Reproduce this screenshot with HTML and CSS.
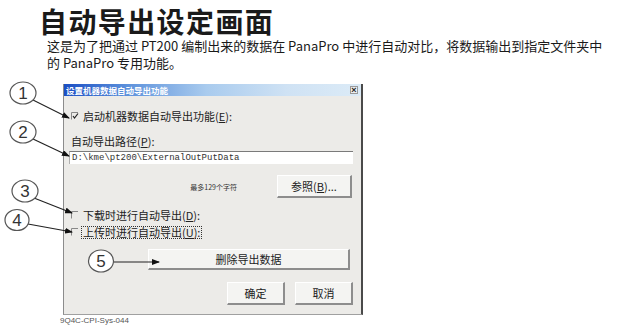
FILE: index.html
```html
<!DOCTYPE html>
<html lang="zh-CN">
<head>
    <meta charset="UTF-8">
    <meta name="viewport" content="width=device-width, initial-scale=1.0">
    <link rel="stylesheet" href="styles.css">
</head>
<body>
    <div class="page">
        <h1 class="title">自动导出设定画面</h1>
        <p class="intro">这是为了把通过 PT200 编制出来的数据在 PanaPro 中进行自动对比，将数据输出到指定文件夹中<br>的 PanaPro 专用功能。</p>

        <div class="dialog">
            <div class="titlebar">
                <span class="titlebar-text">设置机器数据自动导出功能</span>
                <span class="close">×</span>
            </div>
            <div class="dialog-body">
                <div class="check-row row-first">
                    <svg class="chk" width="8" height="8" viewBox="0 0 8 8"><path d="M0.5 7.5 V0.5 H7" fill="none" stroke="#888" stroke-width="1"/><path d="M2 4 L3.5 6 L7 1.5" fill="none" stroke="#222" stroke-width="1.2"/></svg>
                    <span>启动机器数据自动导出功能(<u>E</u>):</span>
                </div>
                <div class="field-label">自动导出路径(<u>P</u>):</div>
                <div class="path-box">D:\kme\pt200\ExternalOutPutData</div>
                <div class="ref-row">
                    <span class="hint">最多129个字符</span>
                    <button class="btn btn-ref">参照(<u>B</u>)...</button>
                </div>
                <div class="check-row row-down">
                    <svg class="chk" width="8" height="8" viewBox="0 0 8 8"><path d="M0.5 7.5 V0.5 H7" fill="none" stroke="#888" stroke-width="1"/></svg>
                    <span>下载时进行自动导出(<u>D</u>):</span>
                </div>
                <div class="check-row row-up">
                    <svg class="chk" width="8" height="8" viewBox="0 0 8 8"><path d="M0.5 7.5 V0.5 H7" fill="none" stroke="#888" stroke-width="1"/></svg>
                    <span class="focus">上传时进行自动导出(<u>U</u>):</span>
                </div>
                <div class="delete-row">
                    <button class="btn btn-delete">删除导出数据</button>
                </div>
                <div class="ok-row">
                    <button class="btn btn-ok">确定</button>
                    <button class="btn btn-cancel">取消</button>
                </div>
            </div>
        </div>
        <div class="caption">9Q4C-CPI-Sys-044</div>

        <!-- numbered callouts drawn over the picture -->
        <svg class="callouts" width="640" height="333" viewBox="0 0 640 333">
            <defs>
                <marker id="head" markerWidth="8" markerHeight="6" refX="7" refY="3" orient="auto" markerUnits="userSpaceOnUse">
                    <path d="M0 0 L8 3 L0 6 Z" fill="#111"/>
                </marker>
            </defs>
            <g class="lines">
                <line x1="33" y1="100" x2="69" y2="118" marker-end="url(#head)"/>
                <line x1="33" y1="139" x2="69" y2="156" marker-end="url(#head)"/>
                <line x1="34" y1="198" x2="72" y2="213" marker-end="url(#head)"/>
                <line x1="28" y1="224" x2="72" y2="232" marker-end="url(#head)"/>
                <line x1="114" y1="262" x2="159" y2="262" marker-end="url(#head)"/>
            </g>
            <g class="bubbles">
                <ellipse cx="23" cy="93" rx="13" ry="11"/>
                <ellipse cx="23" cy="132" rx="13" ry="11"/>
                <ellipse cx="25" cy="191" rx="13" ry="11"/>
                <ellipse cx="17" cy="220" rx="12" ry="10.5"/>
                <ellipse cx="101" cy="261" rx="12.5" ry="11"/>
            </g>
            <g class="nums">
                <text x="23" y="99">1</text>
                <text x="23" y="138">2</text>
                <text x="25" y="197">3</text>
                <text x="17" y="226">4</text>
                <text x="101" y="267">5</text>
            </g>
        </svg>
    </div>
</body>
</html>
```

FILE: styles.css
```css
body {
    margin: 0;
    background: #ffffff;
}

.page {
    position: relative;
    width: 640px;
    height: 333px;
    overflow: hidden;
    font-family: "Noto Sans CJK SC", "Liberation Sans", sans-serif;
    color: #111;
}

.title {
    margin: 5px 0 0 39px;
    font-size: 28px;
    line-height: 32px;
    font-weight: bold;
    letter-spacing: 1.4px;
    color: #1a1a1a;
}

.intro {
    margin: 0 0 0 47px;
    font-size: 13px;
    line-height: 17px;
    color: #1a1a1a;
}

.dialog {
    margin: 13px 0 0 63px;
    width: 300px;
    height: 231px;
    box-sizing: border-box;
    background: #ecebe8;
    border-left: 1px solid #8c8c8c;
    border-right: 2px solid #4a4a4a;
    border-bottom: 1px solid #a0a0a0;
}

.titlebar {
    height: 12px;
    display: flex;
    align-items: center;
    justify-content: space-between;
    padding: 0 3px 0 2px;
    background: linear-gradient(90deg, #1b4fc4 0%, #5f93dc 22%, #a9cbee 48%, #cfe2f4 75%, #dcebf7 100%);
}

.titlebar-text {
    font-size: 8.5px;
    line-height: 10px;
    font-weight: bold;
    color: #ffffff;
}

.close {
    width: 8px;
    height: 8px;
    box-sizing: border-box;
    border: 1px solid #9a9a9a;
    background: #eeeeee;
    font-family: "Liberation Sans", sans-serif;
    font-size: 9px;
    line-height: 6px;
    font-weight: bold;
    text-align: center;
    color: #222;
}

.dialog-body {
    padding: 0 8px 0 5px;
    font-size: 11px;
    color: #222;
}

.dialog-body u {
    text-decoration: underline;
}

.check-row {
    display: flex;
    align-items: center;
    height: 14px;
    line-height: 14px;
    padding-left: 2px;
}

.chk {
    margin-right: 4px;
    flex: none;
}

.row-first {
    margin-top: 13px;
}

.field-label {
    margin: 11px 0 0 2px;
    height: 14px;
    line-height: 14px;
}

.path-box {
    margin-top: 3px;
    height: 13px;
    box-sizing: border-box;
    background: #ffffff;
    border-top: 1px solid #7a7a7a;
    border-left: 1px solid #b0b0b0;
    padding-left: 2px;
    font-family: "Liberation Mono", monospace;
    font-size: 9px;
    line-height: 12px;
    color: #333;
}

.ref-row {
    display: flex;
    align-items: center;
    justify-content: flex-end;
    margin-top: 11px;
    margin-right: 1px;
}

.hint {
    font-size: 7px;
    color: #333;
    margin-right: 40px;
}

.btn {
    font-family: "Noto Sans CJK SC", sans-serif;
    font-size: 11px;
    color: #222;
    background: #f4f4f2;
    border: 1px solid;
    border-color: #ffffff #8d8d8d #8d8d8d #ffffff;
    border-right-width: 2px;
    border-bottom-width: 2px;
    padding: 0;
    box-sizing: border-box;
}

.btn-ref {
    width: 75px;
    height: 23px;
}

.row-down {
    margin-top: 10px;
}

.row-up {
    margin-top: 3px;
}

.focus {
    border: 1px dotted #333;
    line-height: 11px;
    padding: 0 1px;
    margin-left: -2px;
}

.delete-row {
    display: flex;
    justify-content: flex-end;
    margin-top: 10px;
    margin-right: 3px;
}

.btn-delete {
    width: 202px;
    height: 21px;
}

.ok-row {
    display: flex;
    justify-content: flex-end;
    gap: 10px;
    margin-top: 12px;
}

.btn-ok,
.btn-cancel {
    width: 58px;
    height: 23px;
}

.caption {
    margin: 1px 0 0 60px;
    font-family: "Liberation Sans", sans-serif;
    font-size: 8px;
    line-height: 10px;
    color: #555;
}

.callouts {
    position: absolute;
    left: 0;
    top: 0;
    pointer-events: none;
}

.lines line {
    stroke: #222;
    stroke-width: 1.2;
}

.bubbles ellipse {
    fill: #ffffff;
    stroke: #555;
    stroke-width: 1.2;
}

.nums text {
    font-family: "Liberation Sans", sans-serif;
    font-size: 17px;
    fill: #333;
    text-anchor: middle;
}
```
